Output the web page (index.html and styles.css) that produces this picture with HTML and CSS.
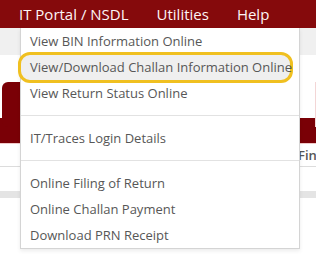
FILE: index.html
```html
<!DOCTYPE html>
<html lang="en">
<head>
	<meta charset="UTF-8">
	<meta name="viewport" content="width=device-width, initial-scale=1.0">
	<title>TDS Menu</title>
	<link rel="stylesheet" href="styles.css">
</head>
<body>
	<nav class="navbar">
		<div class="nav-item open">IT Portal / NSDL
			<ul class="dropdown">
				<li>View BIN Information Online</li>
				<li class="marked">View/Download Challan Information Online</li>
				<li>View Return Status Online</li>
				<li class="divider"></li>
				<li>IT/Traces Login Details</li>
				<li class="divider"></li>
				<li>Online Filing of Return</li>
				<li>Online Challan Payment</li>
				<li>Download PRN Receipt</li>
			</ul>
		</div>
		<div class="nav-item">Utilities</div>
		<div class="nav-item">Help</div>
	</nav>
	<div class="page">
		<div class="sub-bar"></div>
		<div class="toolbar">
			<span class="tool-btn"></span>
			<span class="tool-btn outline"></span>
		</div>
		<div class="section-bar"></div>
		<div class="grid">
			<div class="grid-head"><span class="col-title">Fin</span></div>
			<div class="grid-row"></div>
			<div class="grid-band"></div>
			<div class="grid-row last"><span class="cell"></span></div>
		</div>
	</div>
</body>
</html>
```

FILE: styles.css
```css
body {
	margin: 0;
	font-family: "Open Sans", "Noto Sans", sans-serif;
	background: #fff;
	width: 316px;
	height: 257px;
	overflow: hidden;
}
.navbar {
	height: 28px;
	background-color: #850a0c;
	display: flex;
	align-items: center;
	padding-left: 19px;
	gap: 28px;
	position: relative;
	z-index: 2;
}
.nav-item {
	color: #fdf5f5;
	font-size: 15px;
	line-height: 28px;
	position: relative;
}
.dropdown {
	position: absolute;
	top: 28px;
	left: 1px;
	width: 278px;
	margin: 0;
	padding: 0;
	list-style: none;
	background: #fff;
	border: 1px solid #d4d4d4;
	border-top: none;
	box-shadow: 0 2px 4px rgba(0, 0, 0, 0.08);
	z-index: 3;
}
.dropdown li {
	position: relative;
	height: 26px;
	line-height: 26px;
	padding-left: 9px;
	font-size: 13px;
	color: #575757;
	white-space: nowrap;
}
.dropdown li.divider {
	height: 1px;
	padding: 0;
	margin: 9px 0;
	background: #e2e2e2;
}
.dropdown li.marked::before {
	content: '';
	position: absolute;
	left: -3px;
	top: -2px;
	right: 6px;
	bottom: -3px;
	background: #efefef;
	border: 3px solid #f0c020;
	border-radius: 12px;
	z-index: -1;
}
.sub-bar {
	height: 27px;
	background: #f0f0f0;
}
.toolbar {
	display: flex;
	justify-content: space-between;
	padding-top: 27px;
	height: 63px;
	box-sizing: border-box;
}
.tool-btn {
	width: 40px;
	height: 45px;
	margin-left: 2px;
	background: #7a0006;
	border-radius: 6px;
}
.tool-btn.outline {
	width: 1px;
	margin: 0;
	background: #f3d6d6;
	border-radius: 0;
}
.section-bar {
	height: 25px;
	background: #7a0006;
	border-bottom: 1px solid #f1c9c9;
}
.grid-head {
	height: 22px;
	border-bottom: 1px solid #dcdcdc;
	display: flex;
	align-items: center;
	padding-left: 298px;
}
.col-title {
	font-size: 13px;
	color: #555;
	font-weight: 600;
}
.grid-row {
	height: 24px;
}
.grid-band {
	height: 7px;
	background: #e4e4e4;
}
.grid-row.last {
	height: 32px;
	display: flex;
	justify-content: flex-end;
	align-items: flex-end;
}
.cell {
	width: 1px;
	height: 9px;
	background: #d8d8d8;
	margin-right: 25px;
}
```
